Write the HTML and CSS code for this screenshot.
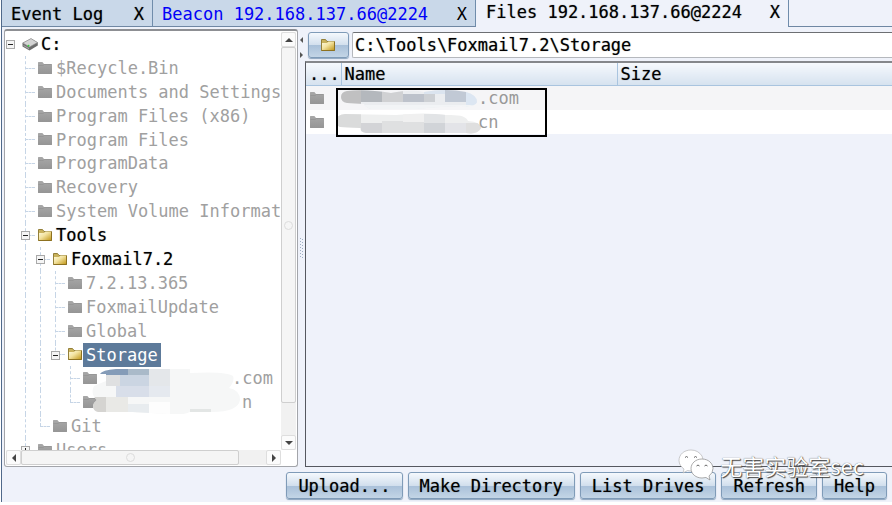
FILE: index.html
```html
<!DOCTYPE html>
<html lang="en">
<head>
<meta charset="utf-8">
<title>Files 192.168.137.66@2224</title>
<link rel="stylesheet" href="styles.css">
</head>
<body>
<svg class="defs" aria-hidden="true">
  <defs>
    <linearGradient id="gold" x1="0" y1="0" x2="1" y2="1"><stop offset="0" stop-color="#fdf9df"/><stop offset=".45" stop-color="#f3e3a0"/><stop offset="1" stop-color="#c39a1f"/></linearGradient>
    <linearGradient id="grey" x1="0" y1="0" x2="0" y2="1"><stop offset="0" stop-color="#a8a8a8"/><stop offset="1" stop-color="#959595"/></linearGradient>
  </defs>
  <symbol id="folder" viewBox="0 0 14 14"><path d="M0 1.6Q0 1 .6 1H4.4L6 3H13.4Q14 3 14 3.6V12.4Q14 13 13.4 13H.6Q0 13 0 12.4Z" fill="url(#grey)"/><path d="M.5 4.5H5L6.5 3.5H13.5" fill="none" stroke="#8f8f8f" stroke-width=".6"/></symbol>
  <symbol id="folder-open" viewBox="0 0 14 14"><path d="M.5 1.500H4.500L6 3.500H13.500V12.500H.5Z" fill="#c9b25c" stroke="#94803a"/><path d="M1 5H6L7.500 3.500H13V12H1Z" fill="url(#gold)"/><path d="M13.500 4V12.500H.5" fill="none" stroke="#8d7120"/></symbol>
  <symbol id="drive" viewBox="0 0 16 14"><path d="M.5 6 9 1.500 15.800 5.500V8.500L7.500 13.500.5 9.500Z" fill="#6c6c6c"/><path d="M.8 6 9 1.600 15.500 5.500 7.500 10Z" fill="#d4d4d4" stroke="#8b8b8b" stroke-width=".6"/><path d="M1.500 8 7 11V12.200L1.500 9Z" fill="#aaa"/><circle cx="6.500" cy="8.700" r="1" fill="#34cf3c"/></symbol>
</svg>

<div class="app">
  <nav class="tabs">
    <div class="tab"><a href="#log">Event Log</a><button aria-label="Close Event Log">X</button></div>
    <div class="tab tab-alert"><a href="#beacon">Beacon 192.168.137.66@2224</a><button aria-label="Close Beacon">X</button></div>
    <div class="tab tab-active"><a href="#files">Files 192.168.137.66@2224</a><button aria-label="Close Files">X</button></div>
    <div class="tabs-rest"></div>
  </nav>

  <main class="split">
    <aside class="browser">
      <div class="tree-view">
        <ul class="tree">
          <li><i class="root"></i><b class="toggle toggle-root"></b><svg class="icon icon-drive"><use href="#drive"/></svg><span class="label strong">C:</span></li>
          <li><i class="root"></i><i class="line branch"></i><svg class="icon"><use href="#folder"/></svg><span class="label">$Recycle.Bin</span></li>
          <li><i class="root"></i><i class="line branch"></i><svg class="icon"><use href="#folder"/></svg><span class="label">Documents and Settings</span></li>
          <li><i class="root"></i><i class="line branch"></i><svg class="icon"><use href="#folder"/></svg><span class="label">Program Files (x86)</span></li>
          <li><i class="root"></i><i class="line branch"></i><svg class="icon"><use href="#folder"/></svg><span class="label">Program Files</span></li>
          <li><i class="root"></i><i class="line branch"></i><svg class="icon"><use href="#folder"/></svg><span class="label">ProgramData</span></li>
          <li><i class="root"></i><i class="line branch"></i><svg class="icon"><use href="#folder"/></svg><span class="label">Recovery</span></li>
          <li><i class="root"></i><i class="line branch"></i><svg class="icon"><use href="#folder"/></svg><span class="label">System Volume Informat</span></li>
          <li><i class="root"></i><i class="line branch"><b class="toggle"></b></i><svg class="icon"><use href="#folder-open"/></svg><span class="label strong">Tools</span></li>
          <li><i class="root"></i><i class="line"></i><i class="line branch"><b class="toggle"></b></i><svg class="icon"><use href="#folder-open"/></svg><span class="label strong">Foxmail7.2</span></li>
          <li><i class="root"></i><i class="line"></i><i class="line"></i><i class="line branch"></i><svg class="icon"><use href="#folder"/></svg><span class="label">7.2.13.365</span></li>
          <li><i class="root"></i><i class="line"></i><i class="line"></i><i class="line branch"></i><svg class="icon"><use href="#folder"/></svg><span class="label">FoxmailUpdate</span></li>
          <li><i class="root"></i><i class="line"></i><i class="line"></i><i class="line branch"></i><svg class="icon"><use href="#folder"/></svg><span class="label">Global</span></li>
          <li><i class="root"></i><i class="line"></i><i class="line"></i><i class="line last branch"><b class="toggle"></b></i><svg class="icon"><use href="#folder-open"/></svg><span class="label selected">Storage</span></li>
          <li><i class="root"></i><i class="line"></i><i class="line"></i><i class="gap"></i><i class="line branch"></i><svg class="icon"><use href="#folder"/></svg><span class="label tail-com">.com</span>
            <svg class="tree-mask" viewBox="0 0 152 48" aria-hidden="true">
              <clipPath id="tm"><path d="M8 8Q10 4 24 3H98V7Q134 5 141 10Q143 15 137 22Q148 24 148 34Q146 46 120 46H98Q88 50 76 48L40 46H6Q-1 44 2 37L5 34Q-2 28 2 20Q9 17 14 15V8Z"/></clipPath>
              <g clip-path="url(#tm)"><path d="M0 0H152V50H0Z" fill="#f6f7f7"/><path d="M0 0H36V9H0Z" fill="#859cb8"/><path d="M36 3H57V9H36Z" fill="#aabac9"/><path d="M57 3H78V20H57Z" fill="#e4e7ea"/><path d="M14 9H36V20H14Z" fill="#dfe0e1"/><path d="M28 9H57V20H28Z" fill="#cbd5e2"/><path d="M24 20H57V31H24Z" fill="#d8dee9"/><path d="M57 20H78V31H57Z" fill="#e5e9ef"/><path d="M0 31H14V48H0Z" fill="#d5d4d1"/><path d="M14 31H36V48H14Z" fill="#e9e9e6"/><path d="M36 38H57V48H36Z" fill="#e8ecef"/><path d="M98 43H119V48H98Z" fill="#e3e6e5"/><path d="M57 36H78V48H57Z" fill="#fdfdfd"/></g>
            </svg>
          </li>
          <li><i class="root"></i><i class="line"></i><i class="line"></i><i class="gap"></i><i class="line last branch"></i><svg class="icon"><use href="#folder"/></svg><span class="label tail-cn">n</span></li>
          <li><i class="root"></i><i class="line"></i><i class="line last branch"></i><svg class="icon"><use href="#folder"/></svg><span class="label">Git</span></li>
          <li><i class="root"></i><i class="line branch"><b class="toggle plus"></b></i><svg class="icon"><use href="#folder"/></svg><span class="label">Users</span></li>
        </ul>
        <div class="vbar"><button class="up" aria-label="Scroll up"></button><div class="thumb"><i></i></div><button class="down" aria-label="Scroll down"></button></div>
      </div>
      <div class="hbar"><button class="left" aria-label="Scroll left"></button><div class="thumb"><i></i></div><button class="right" aria-label="Scroll right"></button></div>
    </aside>

    <div class="splitter"><i class="arrow-left"></i><i class="arrow-right"></i>
      <svg class="grip" viewBox="0 0 4 20"><path d="M.5 0V20M2.5 1V20" stroke="#9fb0c4" stroke-dasharray="1 2"/></svg>
    </div>

    <section class="files">
      <form class="path">
        <button type="button" class="btn" aria-label="Parent folder"><svg class="icon"><use href="#folder-open"/></svg></button>
        <input type="text" aria-label="Path" value="C:\Tools\Foxmail7.2\Storage">
      </form>
      <div class="listing">
        <table>
          <thead><tr><th class="col-type">...</th><th class="col-name">Name</th><th>Size</th></tr></thead>
          <tbody>
            <tr><td><svg class="icon"><use href="#folder"/></svg></td><td><div class="name">
              <svg class="mask" viewBox="0 0 142 24" aria-hidden="true">
                <clipPath id="m1"><path d="M5 11Q5 6 11 5Q30 3 55 7Q76 3 88 6Q110 2 130 6Q141 9 141 16Q140 21 125 20Q100 21 80 23L35 23Q29 21 28 18L11 17Q5 16 5 11Z"/></clipPath>
                <g clip-path="url(#m1)"><path d="M0 0H142V24H0Z" fill="#ebedf0"/><path d="M0 0H25V24H0Z" fill="#c0c0c1"/><path d="M25 0H46V16H25Z" fill="#b4b8bd"/><path d="M46 0H67V16H46Z" fill="#d0d1d3"/><path d="M67 8H88V16H67Z" fill="#bdc2cb"/><path d="M88 8H99V16H88Z" fill="#cdd0d4"/><path d="M88 0H109V8H88Z" fill="#dbe4ef"/><path d="M109 0H130V16H109Z" fill="#c1c9d5"/><path d="M130 0H142V24H130Z" fill="#dce6f2"/><path d="M25 19H142V24H25Z" fill="#f2f4f6"/></g>
              </svg><span>.com</span></div></td><td></td></tr>
            <tr><td><svg class="icon"><use href="#folder"/></svg></td><td><div class="name">
              <svg class="mask" viewBox="0 0 142 24" aria-hidden="true">
                <clipPath id="m2"><path d="M0 11Q0 5 9 4L60 5Q90 2 110 5Q130 4 132 11Q145 12 145 18Q142 25 130 23H30Q24 22 24 18L4 17Q0 15 0 11Z"/></clipPath>
                <g clip-path="url(#m2)"><path d="M0 0H146V24H0Z" fill="#eeefef"/><path d="M0 0H25V18H0Z" fill="#dadbdb"/><path d="M25 13H46V24H25Z" fill="#d3d4d7"/><path d="M46 11H88V24H46Z" fill="#dfe0e1"/><path d="M67 4H88V12H67Z" fill="#f0f0f0"/><path d="M88 4H109V13H88Z" fill="#e2e4e6"/><path d="M88 13H109V24H88Z" fill="#d1d4d8"/><path d="M109 13H130V24H109Z" fill="#e3e4e8"/><path d="M130 13H146V24H130Z" fill="#dfdfdf"/></g>
              </svg><span>cn</span></div></td><td></td></tr>
          </tbody>
        </table>
        <div class="highlight"></div>
      </div>
    </section>
  </main>

  <footer class="actions">
    <button class="btn">Upload...</button>
    <button class="btn">Make Directory</button>
    <button class="btn">List Drives</button>
    <button class="btn">Refresh</button>
    <button class="btn">Help</button>
  </footer>

  <div class="watermark">
    <svg viewBox="0 0 36 32" aria-hidden="true">
      <path d="M13 1C6 1 1 5.500 1 11.500C1 15 3 18 6 20L5 24L9.500 21.500Q19 24 24 18Q27 12 24 7Q20 1 13 1Z" fill="#fff" stroke="#aaa" stroke-width=".6"/>
      <path d="M24 10C17.500 10 13 14.500 13 19.500C13 25 18 29 24 29L28 28.500L32 31L31 27Q35 24 35 19.500C35 14.500 30.500 10 24 10Z" fill="#fff" stroke="#888" stroke-width=".7"/>
      <g fill="none" stroke="#666"><path d="M7 8.500Q8.500 6.500 10 8.500M16 8.500Q17.500 6.500 19 8.500M18.500 17Q20 15 21.500 17M26.500 17Q28 15 29.500 17"/></g>
    </svg>
    <span>无害实验室sec</span>
  </div>
</div>
</body>
</html>
```
FILE: styles.css
```css
* { box-sizing: border-box; }

body {
  margin: 0;
  background: #fff;
  color: #000;
  font: 17px/24px "DejaVu Sans Mono", "Liberation Mono", monospace;
}

button, input { font: inherit; color: inherit; }
ul { list-style: none; margin: 0; padding: 0; }
a { color: inherit; text-decoration: none; }
i, b { display: block; font-style: normal; }

.tab, .strong, .btn, input, th { text-shadow: 0 0 1px rgba(0, 0, 0, 0.5); }

.defs { position: absolute; width: 0; height: 0; }
.icon { display: block; flex: none; width: 14px; height: 14px; }

.app {
  position: relative;
  display: flex;
  flex-direction: column;
  height: calc(100vh - 3px);
  margin-left: 1px;
  border-left: 1px solid #50698a;
  background: #eff2fa;
}

/* Tabs */
.tabs { display: flex; flex: none; height: 27px; }
.tab {
  display: flex;
  justify-content: space-between;
  align-items: center;
  width: 151px;
  padding: 2px 8px 0 9px;
  background: #c9d8e9;
  border-right: 1px solid #6f8cab;
  border-bottom: 1px solid #6f87a3;
  white-space: nowrap;
}
.tab button { padding: 0; border: 0; background: none; text-shadow: inherit; }
.tab-alert { width: 323px; text-shadow: none; }
.tab-alert a { color: #0000f8; }
.tab-active {
  width: 313px;
  padding: 0 8px 4px 10px;
  background: none;
  border-bottom: 0;
}
.tabs-rest { flex: 1; border-bottom: 1px solid #6f87a3; }

/* Split area */
.split { display: flex; flex: 1; min-height: 0; padding-top: 2px; }

.browser {
  display: flex;
  flex-direction: column;
  width: 294px;
  margin-left: 2px;
  padding: 1px;
  background: #fff;
  border: 1px solid #a3a5aa;
  border-top: 2px solid #8d8f93;
  border-radius: 3px;
}
.tree-view { display: flex; flex: 1; min-height: 0; overflow: hidden; }
.tree {
  flex: 1;
  min-width: 0;
  height: 430px;
  overflow: hidden;
  display: grid;
  grid-template-rows: repeat(18, minmax(0, 1fr));
  color: #a0a0a0;
}
.tree li {
  position: relative;
  display: flex;
  align-items: center;
  white-space: pre;
}
.tree .icon { margin: 0 1px 0 5px; }
.tree .icon-drive { width: 16px; margin: 0 0 0 4px; }
.root { flex: none; width: 12px; }
.line, .gap { position: relative; flex: none; align-self: stretch; width: 15px; }
.line::before {
  content: "";
  position: absolute;
  left: 7px;
  top: 0;
  bottom: 0;
  border-left: 1px dashed #c6d5e6;
}
.last::before { bottom: 50%; }
.branch::after {
  content: "";
  position: absolute;
  left: 7px;
  top: 50%;
  width: 10px;
  border-top: 1px dashed #c6d5e6;
}
.toggle {
  position: absolute;
  z-index: 1;
  left: 3px;
  top: 8px;
  width: 9px;
  height: 9px;
  border: 1px solid #a9a9a9;
  background: linear-gradient(#222, #222) center / 5px 1px no-repeat #f5f5f5;
}
.toggle-root { left: 0; }
.plus {
  background:
    linear-gradient(#222, #222) center / 5px 1px no-repeat,
    linear-gradient(#222, #222) center / 1px 5px no-repeat #f5f5f5;
}
.label { padding: 0 3px; }
.strong { color: #000; }
.selected { background: #5d7a9a; color: #fff; }
.tail-com { padding-left: 134px; }
.tail-cn { padding-left: 144px; }
.tree-mask { position: absolute; z-index: 1; left: 86px; top: 0; width: 152px; height: 48px; }

/* Scroll bars */
.vbar, .hbar { display: flex; background: #f1f1f1; }
.vbar { flex-direction: column; flex: none; width: 15px; }
.hbar { flex: none; height: 15px; margin-right: 15px; }
.vbar button, .hbar button {
  display: grid;
  place-items: center;
  flex: none;
  width: 15px;
  height: 15px;
  padding: 0;
  border: 1px solid #dedede;
  border-radius: 2px;
  background: #fbfbfb;
}
.vbar button::before, .hbar button::before { content: ""; border: 4px solid transparent; }
.vbar .up::before { border-top: 0; border-bottom-color: #444; }
.vbar .down::before { border-bottom: 0; border-top-color: #444; }
.hbar .left::before { border-left: 0; border-right-color: #444; }
.hbar .right::before { border-right: 0; border-left-color: #444; }
.vbar .down, .hbar .right { margin-top: auto; margin-left: auto; }
.thumb {
  display: grid;
  place-items: center;
  border: 1px solid #cfcfcf;
  border-radius: 2px;
  background: #f5f5f5;
}
.vbar .thumb { height: 92%; margin-bottom: 32px; }
.hbar .thumb { width: 218px; }
.thumb i { width: 9px; height: 9px; border: 1px solid #dcdcdc; border-radius: 50%; }

/* Splitter */
.splitter {
  display: flex;
  flex-direction: column;
  align-items: center;
  flex: none;
  width: 7px;
  padding-top: 8px;
}
.arrow-left, .arrow-right { border: 3px solid transparent; }
.arrow-left { border-left: 0; border-right-color: #555; }
.arrow-right { margin-top: 9px; border-right: 0; border-left-color: #555; }
.grip { width: 4px; height: 20px; margin-top: 180px; }

/* File list */
.files { display: flex; flex-direction: column; flex: 1; min-width: 0; }
.path { display: flex; gap: 3px; height: 32px; padding: 3px 0 3px 3px; }
.btn {
  padding: 0 11px;
  border: 1px solid #7f9bb8;
  border-radius: 3px;
  background: linear-gradient(#f5f9fd, #d2dfed 50%, #a9c0d9 51%, #c3d5e6);
  box-shadow: 0 1px 1px #8ba4bd;
}
.path .btn { width: 41px; padding: 0 12px; }
.path input {
  flex: 1;
  min-width: 0;
  padding: 0 2px;
  border: 1px solid #b5b8bd;
  border-top-color: #6d6f73;
  border-right: 0;
  border-radius: 2px 0 0 2px;
  background: #fff;
}
.listing {
  position: relative;
  flex: 1;
  border: 1px solid #55585f;
  border-top: 2px solid #85878b;
  border-right: 0;
}
table { width: 100%; border-collapse: collapse; table-layout: fixed; }
th {
  height: 22px;
  padding: 0 3px;
  line-height: 20px;
  font-weight: normal;
  text-align: left;
  border-bottom: 1px solid #a9c4df;
  border-right: 1px solid #a9c4df;
  background: linear-gradient(#f6f9fd, #d6e2ef);
}
th:last-child { border-right: 0; }
.col-type { width: 35px; }
.col-name { width: 276px; }
td { height: 24px; padding: 0 4px; background: #fff; color: #999; }
tbody tr:first-child td { background: #f5f5f7; }
.name { display: flex; height: 24px; margin-left: -9px; }
.mask { flex: none; width: 142px; height: 24px; overflow: visible; }
.highlight {
  position: absolute;
  left: 30px;
  top: 25px;
  width: 211px;
  height: 49px;
  border: 2px solid #000;
}

/* Actions */
.actions {
  display: flex;
  flex: none;
  justify-content: flex-end;
  gap: 5px;
  padding: 5px 5px 3px;
}
.actions .btn { height: 27px; }

.watermark {
  position: absolute;
  right: 28px;
  bottom: 21px;
  display: flex;
  align-items: center;
  gap: 6px;
  color: #fff;
  font: 22px/32px "Noto Sans CJK SC", sans-serif;
  text-shadow: 1px 1px 1px #444, 0 0 1px #555;
}
.watermark svg { width: 36px; height: 32px; }
```
